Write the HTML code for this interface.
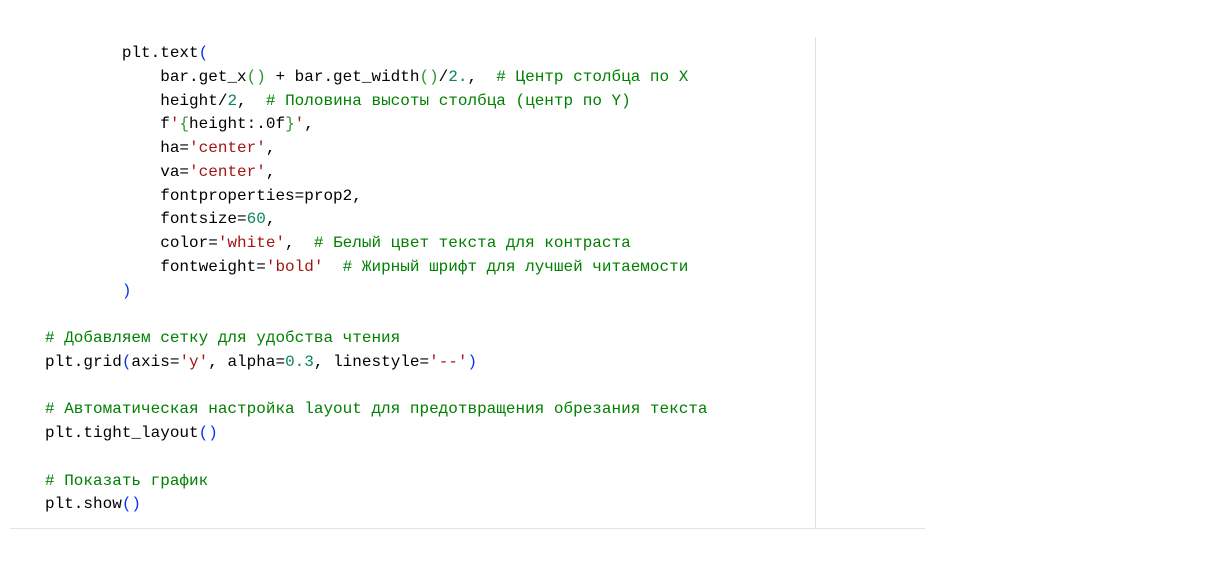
<!DOCTYPE html>
<html><head><meta charset="utf-8"><style>
html,body{margin:0;padding:0;background:#fff;width:1214px;height:572px;overflow:hidden;position:relative}
pre{position:absolute;left:45px;top:42px;margin:0;font-family:"Liberation Mono","DejaVu Sans Mono",monospace;font-size:16px;line-height:23.75px;color:#000}
.c{color:#008000}.s{color:#a31515}.n{color:#098658}.b{color:#0431fa}.g{color:#319331}
.vl{position:absolute;left:815px;top:37px;width:1px;height:492px;background:#e0e0e0}
.hl{position:absolute;left:10px;top:528px;width:915px;height:1px;background:#e3e3e3}
</style></head><body>
<div class="vl"></div><div class="hl"></div>
<pre>        plt.text<span class="b">(</span>
            bar.get_x<span class="g">()</span> + bar.get_width<span class="g">()</span>/<span class="n">2.</span>,  <span class="c"># Центр столбца по X</span>
            height/<span class="n">2</span>,  <span class="c"># Половина высоты столбца (центр по Y)</span>
            f<span class="s">'</span><span class="g">{</span>height:.0f<span class="g">}</span><span class="s">'</span>,
            ha=<span class="s">'center'</span>,
            va=<span class="s">'center'</span>,
            fontproperties=prop2,
            fontsize=<span class="n">60</span>,
            color=<span class="s">'white'</span>,  <span class="c"># Белый цвет текста для контраста</span>
            fontweight=<span class="s">'bold'</span>  <span class="c"># Жирный шрифт для лучшей читаемости</span>
        <span class="b">)</span>

<span class="c"># Добавляем сетку для удобства чтения</span>
plt.grid<span class="b">(</span>axis=<span class="s">'y'</span>, alpha=<span class="n">0.3</span>, linestyle=<span class="s">'--'</span><span class="b">)</span>

<span class="c"># Автоматическая настройка layout для предотвращения обрезания текста</span>
plt.tight_layout<span class="b">()</span>

<span class="c"># Показать график</span>
plt.show<span class="b">()</span></pre>
</body></html>
